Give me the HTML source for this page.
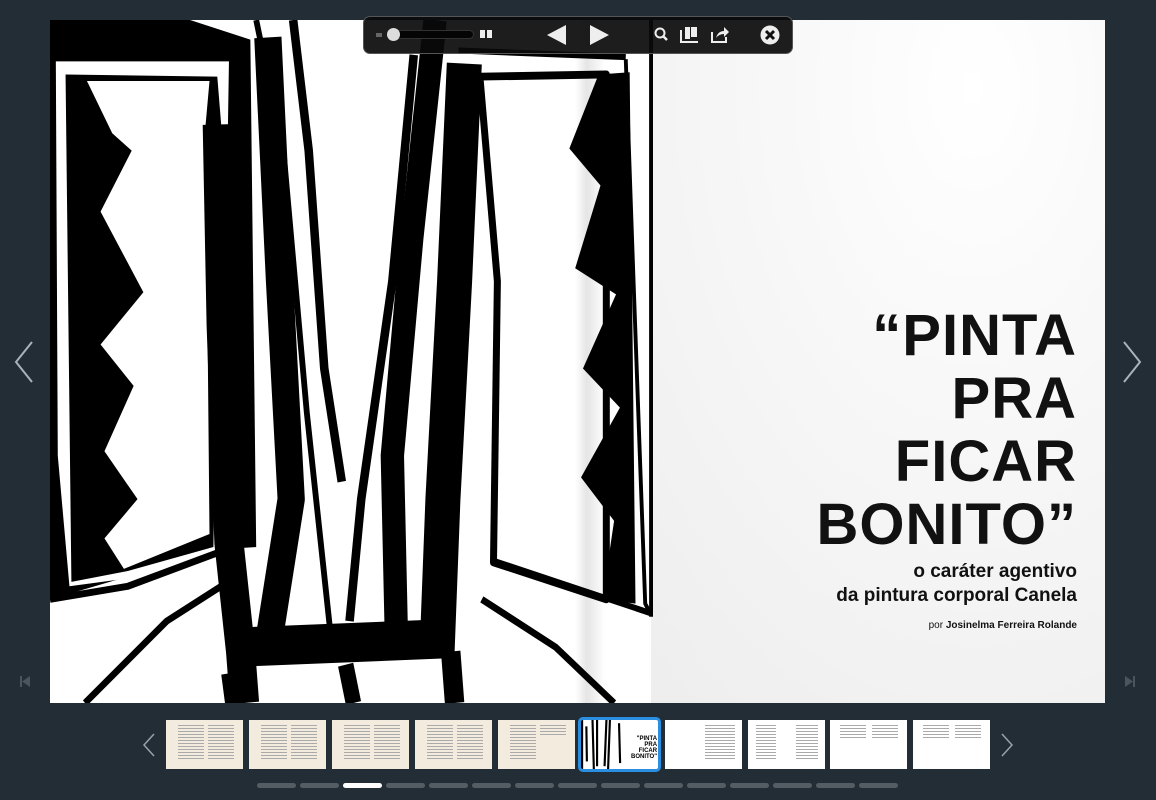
<!DOCTYPE html>
<html><head><meta charset="utf-8"><style>
*{margin:0;padding:0;box-sizing:border-box}
body{width:1156px;height:800px;background:#222d36;position:relative;overflow:hidden;font-family:"Liberation Sans",sans-serif}
.page{position:absolute;left:50px;top:20px;width:1055px;height:683px;background:#fff;overflow:hidden}
.rp{position:absolute;left:528px;top:0;width:527px;height:683px;background:radial-gradient(ellipse at 75% 10%,#ffffff 0%,#f8f8f8 35%,#ececec 100%)}
.spine{position:absolute;left:525px;top:0;width:30px;height:683px;background:linear-gradient(90deg,rgba(0,0,0,0) 0%,rgba(0,0,0,.10) 40%,rgba(0,0,0,0) 100%)}
.title{position:absolute;right:28px;top:284px;text-align:right;font-weight:bold;font-size:58px;line-height:63px;letter-spacing:1px;color:#111}
.sub{position:absolute;right:28px;top:540px;text-align:right;font-weight:bold;font-size:19px;line-height:24px;color:#111}
.by{position:absolute;right:28px;top:600px;font-size:10px;color:#111}
.bar{position:absolute;left:363px;top:16px;width:430px;height:38px;background:rgba(10,10,10,.92);border-radius:7px;border:1px solid #555}
.th{position:absolute;top:720px;width:77px;height:49px;background:#f3ebde}
.th i{position:absolute;top:5px;width:26px;height:36px;background:repeating-linear-gradient(#aaa 0 1px,transparent 1px 3px)}
.dot{position:absolute;top:783px;width:39px;height:5px;border-radius:3px;background:#555d64}
</style></head><body>
<div class="page">
<div class="rp"></div>
<svg width="610" height="683" viewBox="0 0 1568 1568" preserveAspectRatio="none" style="position:absolute;left:0;top:0">
<rect width="1545" height="1568" fill="#fff"/>
<path d="M0 0H360L515 45L530 1210L440 1215L0 1330Z" fill="#000"/>
<path d="M15 95L460 95L440 1215L300 1270L50 1300L20 1000Z" fill="#fff"/>
<path d="M40 125L430 130L440 240L420 1210L200 1265L55 1290Z" fill="#000"/>
<path d="M95 140L410 140L400 240L410 1180L190 1260L140 1190L225 1100L140 990L215 840L130 745L240 625L130 440L210 300L160 260Z" fill="#fff"/>
<g fill="none" stroke="#000" stroke-linejoin="round" stroke-linecap="butt">
<polyline points="430,240 440,700 460,1200 490,1450 500,1568" stroke-width="75"/>
<polyline points="560,40 590,600 620,1100 560,1440" stroke-width="70"/>
<polyline points="530,0 600,300 660,900 720,1400" stroke-width="15"/>
<polyline points="625,0 665,300 705,800 750,1060" stroke-width="22"/>
<polyline points="935,80 880,600 800,1100 770,1380" stroke-width="22"/>
<polyline points="990,0 930,500 880,1000 890,1400" stroke-width="60"/>
<polyline points="1065,100 1040,600 1010,1100 995,1450" stroke-width="90"/>
<polyline points="480,1440 1030,1420" stroke-width="90"/>
<polyline points="460,1500 470,1568" stroke-width="40"/>
<polyline points="760,1480 780,1568" stroke-width="40"/>
<polyline points="1030,1450 1040,1568" stroke-width="50"/>
<polyline points="90,1568 300,1380 440,1300" stroke-width="16"/>
<polyline points="0,1330 200,1300 440,1220" stroke-width="16"/>
<polygon points="1105,130 1430,125 1430,1330 1140,1245 1150,600" stroke-width="18"/>
<polyline points="1110,1330 1300,1440 1450,1568" stroke-width="16"/>
<polyline points="1135,1240 1545,1362" stroke-width="14"/>
<polyline points="1480,90 1500,600 1530,1340 1545,1365" stroke-width="10"/>
<polyline points="1050,70 1480,85" stroke-width="14"/>
</g>
<path d="M1410 125L1490 120L1505 1340L1420 1330L1450 1150L1365 1050L1465 890L1370 800L1455 630L1350 570L1415 380L1335 295Z" fill="#000"/>
<rect x="1540" y="0" width="10" height="1370" fill="#000"/>
</svg>
<div class="spine"></div>
<div class="title">“PINTA<br>PRA<br>FICAR<br>BONITO”</div>
<div class="sub">o caráter agentivo<br>da pintura corporal Canela</div>
<div class="by">por <b>Josinelma Ferreira Rolande</b></div>
</div>
<div class="bar">
<div style="position:absolute;left:12px;top:16px;width:6px;height:4px;background:#666"></div>
<div style="position:absolute;left:26px;top:13px;width:84px;height:9px;border:1px solid #333;border-radius:5px;background:#050505"></div>
<div style="position:absolute;left:23px;top:11px;width:13px;height:13px;border-radius:50%;background:#ddd"></div>
<div style="position:absolute;left:116px;top:13px;width:5px;height:8px;background:#eee"></div>
<div style="position:absolute;left:123px;top:13px;width:5px;height:8px;background:#eee"></div>
<svg style="position:absolute;left:183px;top:8px" width="20" height="20"><path d="M0 10L19 0V20Z" fill="#eee"/></svg>
<svg style="position:absolute;left:226px;top:8px" width="20" height="20"><path d="M19 10L0 0V20Z" fill="#eee"/></svg>
<svg style="position:absolute;left:290px;top:10px" width="16" height="16"><circle cx="6" cy="6" r="4.5" stroke="#eee" stroke-width="2" fill="none"/><path d="M9 9L13 13" stroke="#eee" stroke-width="2.5"/></svg>
<svg style="position:absolute;left:316px;top:9px" width="20" height="18"><path d="M1 4V16H18" stroke="#eee" stroke-width="2" fill="none"/><rect x="5" y="1" width="5" height="12" fill="#eee"/><rect x="11" y="1" width="6" height="10" fill="#eee"/></svg>
<svg style="position:absolute;left:346px;top:9px" width="20" height="18"><path d="M2 6V16H16V11" stroke="#eee" stroke-width="2" fill="none"/><path d="M6 12Q8 5 14 5V1L19 6L14 11V8Q9 8 6 12Z" fill="#eee"/></svg>
<svg style="position:absolute;left:396px;top:8px" width="20" height="20"><circle cx="10" cy="10" r="9.5" fill="#eee"/><path d="M6 6L14 14M14 6L6 14" stroke="#111" stroke-width="3"/></svg>
</div>
<svg style="position:absolute;left:12px;top:340px" width="24" height="44"><path d="M20 2L4 22L20 42" stroke="#aab3bb" stroke-width="2" fill="none"/></svg>
<svg style="position:absolute;left:1120px;top:340px" width="24" height="44"><path d="M4 2L20 22L4 42" stroke="#aab3bb" stroke-width="2" fill="none"/></svg>
<div style="position:absolute;left:20px;top:676px;width:2px;height:11px;background:#4a555e"></div><svg style="position:absolute;left:22px;top:676px" width="8" height="11"><path d="M8 0L0 5.5L8 11Z" fill="#4a555e"/></svg>
<svg style="position:absolute;left:1125px;top:676px" width="8" height="11"><path d="M0 0L8 5.5L0 11Z" fill="#4a555e"/></svg><div style="position:absolute;left:1133px;top:676px;width:2px;height:11px;background:#4a555e"></div>
<svg style="position:absolute;left:142px;top:733px" width="14" height="24"><path d="M12 1L2 12L12 23" stroke="#99a2aa" stroke-width="1.5" fill="none"/></svg>
<svg style="position:absolute;left:1000px;top:733px" width="14" height="24"><path d="M2 1L12 12L2 23" stroke="#99a2aa" stroke-width="1.5" fill="none"/></svg>
<div class="th" style="left:166px"><i style="left:12px"></i><i style="left:42px"></i></div>
<div class="th" style="left:249px"><i style="left:12px"></i><i style="left:42px"></i></div>
<div class="th" style="left:332px"><i style="left:12px"></i><i style="left:42px"></i></div>
<div class="th" style="left:415px"><i style="left:12px"></i><i style="left:42px"></i></div>
<div class="th" style="left:498px"><i style="left:12px"></i><i style="left:42px;height:10px"></i></div>
<div style="position:absolute;left:578px;top:717px;width:83px;height:55px;border:3px solid #2a8fe0;border-radius:5px;background:#fff;overflow:hidden"><svg width="42" height="50" viewBox="0 0 1568 1568" preserveAspectRatio="none" style="position:absolute;left:0;top:0"><g fill="none" stroke="#000" stroke-width="80"><polyline points="40,0 40,1568"/><polyline points="430,0 480,1568"/><polyline points="600,0 600,1450"/><polyline points="950,0 880,1450"/><polyline points="1080,0 1010,1568"/><polyline points="1420,100 1460,1350"/><polyline points="200,200 220,1300"/></g></svg><div style="position:absolute;left:50px;top:16px;font-size:6px;font-weight:bold;line-height:6px;text-align:right">"PINTA<br>PRA<br>FICAR<br>BONITO"</div></div>
<div class="th" style="left:665px;background:#fff"><i style="left:40px;width:30px"></i></div>
<div class="th" style="left:748px;background:#fff"><i style="left:8px;width:20px"></i><i style="left:48px;width:22px"></i></div>
<div class="th" style="left:830px;background:#fff"><i style="left:10px;height:14px"></i><i style="left:42px;height:14px"></i></div>
<div class="th" style="left:913px;background:#fff"><i style="left:10px;height:14px"></i><i style="left:42px;height:14px"></i></div>
<div class="dot" style="left:257px"></div><div class="dot" style="left:300px"></div><div class="dot" style="left:343px;background:#fff"></div><div class="dot" style="left:386px"></div><div class="dot" style="left:429px"></div><div class="dot" style="left:472px"></div><div class="dot" style="left:515px"></div><div class="dot" style="left:558px"></div><div class="dot" style="left:601px"></div><div class="dot" style="left:644px"></div><div class="dot" style="left:687px"></div><div class="dot" style="left:730px"></div><div class="dot" style="left:773px"></div><div class="dot" style="left:816px"></div><div class="dot" style="left:859px"></div>
</body></html>
